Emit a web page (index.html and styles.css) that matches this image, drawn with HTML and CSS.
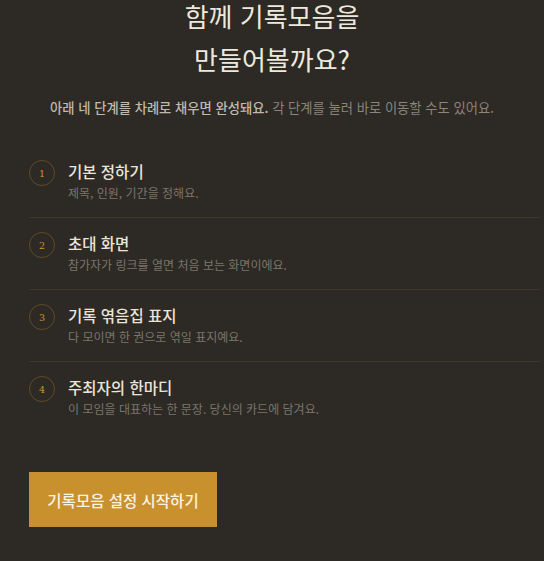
FILE: index.html
```html
<!DOCTYPE html>
<html lang="ko">
<head>
    <meta charset="UTF-8">
    <meta name="viewport" content="width=device-width, initial-scale=1.0">
    <title>기록모음 만들기</title>
    <link rel="stylesheet" href="styles.css">
</head>
<body>
    <main class="page">
        <header class="intro">
            <h1>함께 기록모음을<br>만들어볼까요?</h1>
            <p class="subtitle"><strong>아래 네 단계를 차례로 채우면 완성돼요.</strong> 각 단계를 눌러 바로 이동할 수도 있어요.</p>
        </header>

        <ol class="steps">
            <li class="step">
                <span class="step-num">1</span>
                <div class="step-body">
                    <div class="step-title">기본 정하기</div>
                    <div class="step-desc">제목, 인원, 기간을 정해요.</div>
                </div>
            </li>
            <li class="step">
                <span class="step-num">2</span>
                <div class="step-body">
                    <div class="step-title">초대 화면</div>
                    <div class="step-desc">참가자가 링크를 열면 처음 보는 화면이에요.</div>
                </div>
            </li>
            <li class="step">
                <span class="step-num">3</span>
                <div class="step-body">
                    <div class="step-title">기록 엮음집 표지</div>
                    <div class="step-desc">다 모이면 한 권으로 엮일 표지예요.</div>
                </div>
            </li>
            <li class="step">
                <span class="step-num">4</span>
                <div class="step-body">
                    <div class="step-title">주최자의 한마디</div>
                    <div class="step-desc">이 모임을 대표하는 한 문장. 당신의 카드에 담겨요.</div>
                </div>
            </li>
        </ol>

        <button class="start-button">기록모음 설정 시작하기</button>
    </main>
</body>
</html>
```

FILE: styles.css
```css
body {
    margin: 0;
    background-color: #2d2924;
    font-family: 'Noto Sans CJK KR', 'Noto Sans', sans-serif;
    color: #ece6da;
    overflow: hidden;
}

.page {
    padding: 0 4px 40px 29px;
}

.intro {
    margin-right: 25px;
    text-align: center;
}

h1 {
    margin: -6px 0 0;
    font-size: 26px;
    font-weight: 400;
    line-height: 43px;
    color: #eee9df;
}

.subtitle {
    margin: 18px 0 0;
    font-size: 13.3px;
    line-height: 20px;
    color: #8b857b;
}

.subtitle strong {
    font-weight: 500;
    color: #bfb9ae;
}

.steps {
    list-style: none;
    margin: 28px 0 0;
    padding: 0;
}

.step {
    display: flex;
    align-items: flex-start;
    gap: 13px;
    padding: 14px 0;
    border-bottom: 1px solid #3e3729;
}

.step:last-child {
    border-bottom: none;
}

.step-num {
    flex: none;
    width: 24px;
    height: 24px;
    border: 1px solid #5e4b29;
    border-radius: 50%;
    display: flex;
    align-items: center;
    justify-content: center;
    font-family: 'DejaVu Serif', 'Liberation Serif', serif;
    font-size: 9.5px;
    color: #d0962c;
}

.step-title {
    font-size: 15.5px;
    font-weight: 500;
    line-height: 22px;
    color: #ebe5d9;
}

.step-desc {
    margin-top: 1px;
    font-size: 12px;
    line-height: 20px;
    color: #7b756b;
}

.start-button {
    margin-top: 39px;
    width: 188px;
    height: 55px;
    border: none;
    background-color: #c8912e;
    color: #fbf3e2;
    font-family: 'Noto Sans CJK KR', 'Noto Sans', sans-serif;
    font-size: 15.5px;
    font-weight: 500;
    cursor: pointer;
}
```
